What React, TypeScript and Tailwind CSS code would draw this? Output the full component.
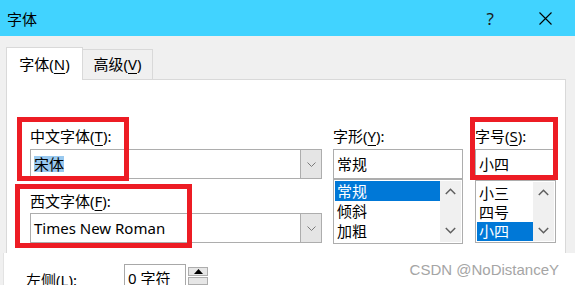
import type { ReactNode } from "react";

const ui = "font-['Noto_Sans','Noto_Sans_CJK_SC',sans-serif]";

function Key({ k }: { k: string }) {
    return (
        <>
            (<span className="underline underline-offset-[3px] decoration-1">{k}</span>)
        </>
    );
}

function Chevron({ up, small }: { up?: boolean; small?: boolean }) {
    if (small) {
        return (
            <svg width="9" height="5" viewBox="0 0 9 5">
                <polyline points="0.5,0.5 4.5,4.5 8.5,0.5" fill="none" stroke="#7a7a7a" strokeWidth="1" />
            </svg>
        );
    }
    return (
        <svg width="11" height="7" viewBox="0 0 11 7">
            <polyline
                points={up ? "0.8,6 5.5,1.3 10.2,6" : "0.8,1 5.5,5.7 10.2,1"}
                fill="none"
                stroke="#5f5f5f"
                strokeWidth="1.5"
            />
        </svg>
    );
}

function Combo({ children }: { children: ReactNode }) {
    return (
        <div className="h-[30px] border border-[#adadad] bg-white flex">
            <div className="flex-1 flex items-center pl-[3px] leading-[20px]">{children}</div>
            <div className="w-[21px] bg-[#e5e5e5] border-l border-[#adadad] flex items-center justify-center">
                <Chevron small />
            </div>
        </div>
    );
}

function ScrollBar({ pt, pb }: { pt: string; pb: string }) {
    return (
        <div className={`flex-1 bg-[#f0f0f0] flex flex-col justify-between items-center ${pt} ${pb}`}>
            <Chevron up />
            <Chevron />
        </div>
    );
}

function RedBox({ className }: { className: string }) {
    return <div className={`absolute border-[5px] border-[#ed1c24] ${className}`} />;
}

export default function App() {
    return (
        <div className={`relative w-[575px] h-[285px] overflow-hidden bg-[#f0f0f0] text-black text-[15px] ${ui}`}>
            {/* title bar */}
            <div className="h-[36px] bg-[#41d3ff] flex items-center pl-[7px] pr-[23px]">
                <span className="leading-none pt-[2px]">字体</span>
                <span className="ml-auto text-[17px] leading-none pt-[1px] text-[#1a1a1a]">?</span>
                <svg className="ml-[45px]" width="13" height="13" viewBox="0 0 13 13">
                    <path d="M0.5 0.5 L12.5 12.5 M12.5 0.5 L0.5 12.5" stroke="#000" strokeWidth="1.1" />
                </svg>
            </div>

            {/* tabs */}
            <div className="flex items-end h-[32px] mt-[11px] pl-[6px]">
                <div className="relative z-10 -mb-px h-[33px] w-[77px] bg-white border border-b-0 border-[#d9d9d9] flex items-center justify-center leading-none">
                    字体<Key k="N" />
                </div>
                <div className="h-[30px] w-[70px] border-t border-r border-[#d9d9d9] flex items-center justify-center leading-none">
                    高级<Key k="V" />
                </div>
            </div>

            {/* panel */}
            <div className="ml-[6px] w-[560px] h-[174px] bg-white border border-b-0 border-[#d9d9d9] pt-[46px] pl-[23px] flex">
                <div className="w-[292px]">
                    <div className="leading-[20px]">中文字体<Key k="T" />:</div>
                    <div className="mt-[3px]">
                        <Combo>
                            <span className="bg-[#99c9ef] leading-[16px]">宋体</span>
                        </Combo>
                    </div>
                    <div className="mt-[12px] leading-[20px]">西文字体<Key k="F" />:</div>
                    <div className="mt-[2px]">
                        <Combo>Times New Roman</Combo>
                    </div>
                </div>

                <div className="ml-[11px] w-[130px]">
                    <div className="leading-[20px]">字形<Key k="Y" />:</div>
                    <div className="mt-[3px] h-[30px] border border-[#adadad] flex items-center pl-[3px]">常规</div>
                    <div className="h-[65px] border border-[#adadad] flex p-px">
                        <div className="w-[105px] leading-[20px]">
                            <div className="h-[20px] bg-[#0078d7] text-white pl-[2px]">常规</div>
                            <div className="h-[20px] pl-[2px]">倾斜</div>
                            <div className="h-[20px] pl-[2px]">加粗</div>
                        </div>
                        <ScrollBar pt="pt-[7px]" pb="pb-[8px]" />
                    </div>
                </div>

                <div className="ml-[12px] w-[81px]">
                    <div className="leading-[20px]">字号<Key k="S" />:</div>
                    <div className="mt-[3px] h-[30px] border border-[#adadad] flex items-center pl-[3px]">小四</div>
                    <div className="mt-px h-[63px] border border-[#adadad] flex p-px">
                        <div className="w-[56px] pt-[2px] leading-[19px]">
                            <div className="h-[19px] pl-[2px]">小三</div>
                            <div className="h-[19px] pl-[2px]">四号</div>
                            <div className="h-[19px] bg-[#0078d7] text-white pl-[2px]">小四</div>
                        </div>
                        <ScrollBar pt="pt-[7px]" pb="pb-[7px]" />
                    </div>
                </div>
            </div>

            {/* overlapping paragraph dialog */}
            <div className="h-[32px] flex bg-white">
                <div className="w-[3px] bg-[#f0f0f0]" />
                <div className="flex-1 flex border-l border-[#e3e3e3]">
                    <div className="ml-[22px] mt-[17px] w-[98px] leading-[20px]">左侧<Key k="L" />:</div>
                    <div className="mt-[11px] w-[62px] h-[30px] border border-[#a8a8a8] pl-[3px] pt-[3px] leading-[20px]">0 字符</div>
                    <div className="ml-[2px] mt-[14px] w-[20px] flex flex-col gap-px">
                        <div className="h-[11px] bg-[#e6e6e6] border border-[#adadad] flex items-center justify-center">
                            <svg width="9" height="5" viewBox="0 0 9 5">
                                <polygon points="0,5 4.5,0 9,5" fill="#000" />
                            </svg>
                        </div>
                        <div className="h-[11px] bg-[#e6e6e6] border border-[#adadad]" />
                    </div>
                    <div className="ml-auto mr-[16px] mt-[8px] font-['Liberation_Sans',sans-serif] text-[15px] leading-[17px] text-[#a5a5a5]">
                        CSDN @NoDistanceY
                    </div>
                </div>
            </div>

            {/* annotation boxes */}
            <RedBox className="left-[17px] top-[117px] w-[112px] h-[64px]" />
            <RedBox className="left-[15px] top-[184px] w-[177px] h-[64px]" />
            <RedBox className="left-[470px] top-[117px] w-[88px] h-[63px]" />
        </div>
    );
}
